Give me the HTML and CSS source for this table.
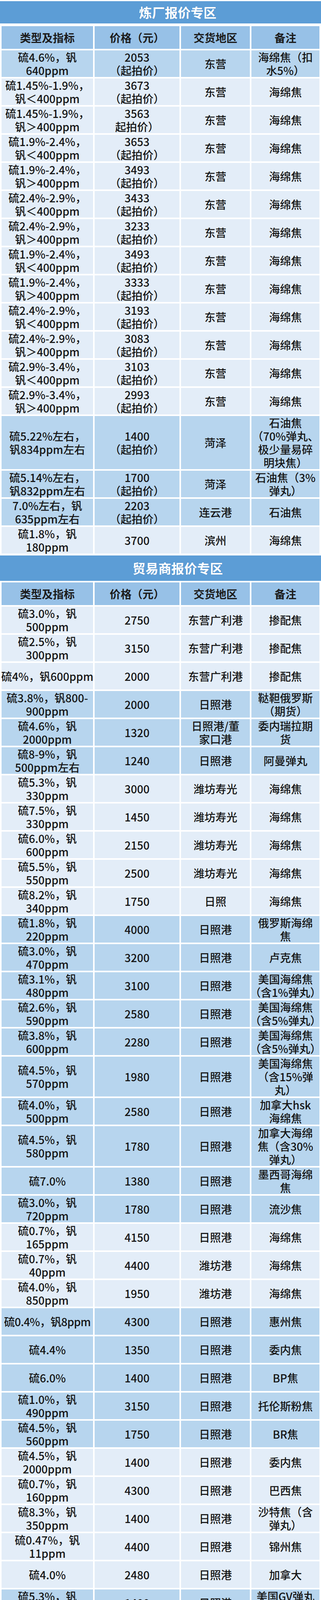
FILE: index.html
```html
<!DOCTYPE html>
<html lang="zh-CN">
<head>
<meta charset="utf-8">
<title>报价专区</title>
<link rel="stylesheet" href="styles.css">
</head>
<body>
<section class="zone zone-one">
<div class="zone-title first">炼厂报价专区</div>
<div class="grid">
<div class="row head"><div>类型及指标</div><div>价格（元）</div><div>交货地区</div><div>备注</div></div>
<div class="row d"><div>硫4.6%，钒<br>640ppm</div><div>2053<br>（起拍价）</div><div>东营</div><div>海绵焦（扣<br>水5%）</div></div>
<div class="row l"><div>硫1.45%-1.9%，<br>钒＜400ppm</div><div>3673<br>（起拍价）</div><div>东营</div><div>海绵焦</div></div>
<div class="row l"><div>硫1.45%-1.9%，<br>钒＞400ppm</div><div>3563<br>起拍价）</div><div>东营</div><div>海绵焦</div></div>
<div class="row l"><div>硫1.9%-2.4%，<br>钒＜400ppm</div><div>3653<br>（起拍价）</div><div>东营</div><div>海绵焦</div></div>
<div class="row l"><div>硫1.9%-2.4%，<br>钒＞400ppm</div><div>3493<br>（起拍价）</div><div>东营</div><div>海绵焦</div></div>
<div class="row l"><div>硫2.4%-2.9%，<br>钒＜400ppm</div><div>3433<br>（起拍价）</div><div>东营</div><div>海绵焦</div></div>
<div class="row l"><div>硫2.4%-2.9%，<br>钒＞400ppm</div><div>3233<br>（起拍价）</div><div>东营</div><div>海绵焦</div></div>
<div class="row l"><div>硫1.9%-2.4%，<br>钒＜400ppm</div><div>3493<br>（起拍价）</div><div>东营</div><div>海绵焦</div></div>
<div class="row l"><div>硫1.9%-2.4%，<br>钒＞400ppm</div><div>3333<br>（起拍价）</div><div>东营</div><div>海绵焦</div></div>
<div class="row l"><div>硫2.4%-2.9%，<br>钒＜400ppm</div><div>3193<br>（起拍价）</div><div>东营</div><div>海绵焦</div></div>
<div class="row l"><div>硫2.4%-2.9%，<br>钒＞400ppm</div><div>3083<br>（起拍价）</div><div>东营</div><div>海绵焦</div></div>
<div class="row l"><div>硫2.9%-3.4%，<br>钒＜400ppm</div><div>3103<br>（起拍价）</div><div>东营</div><div>海绵焦</div></div>
<div class="row l"><div>硫2.9%-3.4%，<br>钒＞400ppm</div><div>2993<br>（起拍价）</div><div>东营</div><div>海绵焦</div></div>
<div class="row d h4"><div>硫5.22%左右，<br>钒834ppm左右</div><div>1400<br>（起拍价）</div><div>菏泽</div><div>石油焦<br>（70%弹丸、<br>极少量易碎<br>明块焦）</div></div>
<div class="row d"><div>硫5.14%左右，<br>钒832ppm左右</div><div>1700<br>（起拍价）</div><div>菏泽</div><div>石油焦（3%<br>弹丸）</div></div>
<div class="row d"><div>7.0%左右，钒<br>635ppm左右</div><div>2203<br>（起拍价）</div><div>连云港</div><div>石油焦</div></div>
<div class="row l"><div>硫1.8%，钒<br>180ppm</div><div>3700</div><div>滨州</div><div>海绵焦</div></div>
</div>
</section>

<section class="zone zone-two">
<div class="zone-title second">贸易商报价专区</div>
<div class="grid">
<div class="row head"><div>类型及指标</div><div>价格（元）</div><div>交货地区</div><div>备注</div></div>
<div class="row l"><div>硫3.0%，钒<br>500ppm</div><div>2750</div><div>东营广利港</div><div>掺配焦</div></div>
<div class="row l"><div>硫2.5%，钒<br>300ppm</div><div>3150</div><div>东营广利港</div><div>掺配焦</div></div>
<div class="row l"><div>硫4%，钒600ppm</div><div>2000</div><div>东营广利港</div><div>掺配焦</div></div>
<div class="row d"><div>硫3.8%，钒800-<br>900ppm</div><div>2000</div><div>日照港</div><div>鞑靼俄罗斯<br>（期货）</div></div>
<div class="row d"><div>硫4.6%，钒<br>2000ppm</div><div>1320</div><div>日照港/董<br>家口港</div><div>委内瑞拉期<br>货</div></div>
<div class="row d"><div>硫8-9%，钒<br>500ppm左右</div><div>1240</div><div>日照港</div><div>阿曼弹丸</div></div>
<div class="row l"><div>硫5.3%，钒<br>330ppm</div><div>3000</div><div>潍坊寿光</div><div>海绵焦</div></div>
<div class="row l"><div>硫7.5%，钒<br>330ppm</div><div>1450</div><div>潍坊寿光</div><div>海绵焦</div></div>
<div class="row l"><div>硫6.0%，钒<br>600ppm</div><div>2150</div><div>潍坊寿光</div><div>海绵焦</div></div>
<div class="row l"><div>硫5.5%，钒<br>550ppm</div><div>2500</div><div>潍坊寿光</div><div>海绵焦</div></div>
<div class="row l"><div>硫8.2%，钒<br>340ppm</div><div>1750</div><div>日照</div><div>海绵焦</div></div>
<div class="row d"><div>硫1.8%，钒<br>220ppm</div><div>4000</div><div>日照港</div><div>俄罗斯海绵<br>焦</div></div>
<div class="row d"><div>硫3.0%，钒<br>470ppm</div><div>3200</div><div>日照港</div><div>卢克焦</div></div>
<div class="row d"><div>硫3.1%，钒<br>480ppm</div><div>3100</div><div>日照港</div><div>美国海绵焦<br>（含1%弹丸）</div></div>
<div class="row d"><div>硫2.6%，钒<br>590ppm</div><div>2580</div><div>日照港</div><div>美国海绵焦<br>（含5%弹丸）</div></div>
<div class="row d"><div>硫3.8%，钒<br>600ppm</div><div>2280</div><div>日照港</div><div>美国海绵焦<br>（含5%弹丸）</div></div>
<div class="row d h3"><div>硫4.5%，钒<br>570ppm</div><div>1980</div><div>日照港</div><div>美国海绵焦<br>（含15%弹<br>丸）</div></div>
<div class="row d"><div>硫4.0%，钒<br>500ppm</div><div>2580</div><div>日照港</div><div>加拿大hsk<br>海绵焦</div></div>
<div class="row d h3"><div>硫4.5%，钒<br>580ppm</div><div>1780</div><div>日照港</div><div>加拿大海绵<br>焦（含30%<br>弹丸）</div></div>
<div class="row d"><div>硫7.0%</div><div>1380</div><div>日照港</div><div>墨西哥海绵<br>焦</div></div>
<div class="row d"><div>硫3.0%，钒<br>720ppm</div><div>1780</div><div>日照港</div><div>流沙焦</div></div>
<div class="row l"><div>硫0.7%，钒<br>165ppm</div><div>4150</div><div>日照港</div><div>海绵焦</div></div>
<div class="row l"><div>硫0.7%，钒<br>40ppm</div><div>4400</div><div>潍坊港</div><div>海绵焦</div></div>
<div class="row l"><div>硫4.0%，钒<br>850ppm</div><div>1950</div><div>潍坊港</div><div>海绵焦</div></div>
<div class="row d"><div class="fit">硫0.4%，钒8ppm</div><div>4300</div><div>日照港</div><div>惠州焦</div></div>
<div class="row d"><div>硫4.4%</div><div>1350</div><div>日照港</div><div>委内焦</div></div>
<div class="row d"><div>硫6.0%</div><div>1400</div><div>日照港</div><div>BP焦</div></div>
<div class="row d"><div>硫1.0%，钒<br>490ppm</div><div>3150</div><div>日照港</div><div>托伦斯粉焦</div></div>
<div class="row d"><div>硫4.5%，钒<br>560ppm</div><div>1750</div><div>日照港</div><div>BR焦</div></div>
<div class="row l"><div>硫4.5%，钒<br>2000ppm</div><div>1400</div><div>日照港</div><div>委内焦</div></div>
<div class="row l"><div>硫0.7%，钒<br>160ppm</div><div>4300</div><div>日照港</div><div>巴西焦</div></div>
<div class="row l"><div>硫8.3%，钒<br>350ppm</div><div>1400</div><div>日照港</div><div>沙特焦（含<br>弹丸）</div></div>
<div class="row l"><div>硫0.47%，钒<br>11ppm</div><div>4400</div><div>日照港</div><div>锦州焦</div></div>
<div class="row l"><div>硫4.0%</div><div>2480</div><div>日照港</div><div>加拿大</div></div>
<div class="row d"><div>硫5.3%，钒<br>744ppm</div><div>1400</div><div>日照港</div><div>美国GV弹丸<br>焦</div></div>
<div class="row d"><div>硫3.8%，钒<br>800ppm</div><div>2200</div><div>日照港</div><div>鞑靼俄焦<br>（吨包）</div></div>
<div class="row l"><div>硫0.5%，钒<br>20ppm</div><div>4000</div><div>岚山港</div><div>印尼焦</div></div>
<div class="row l"><div>硫4.5%</div><div>1350</div><div>岚山港</div><div>俄罗斯焦</div></div>
<div class="row l"><div>硫4.5%</div><div>1050</div><div>日照港<br>岚山港</div><div>委内焦</div></div>
<div class="row d h4"><div>硫8.3%，钒<br>340ppm</div><div>暂未报价</div><div>日照港<br>潍坊港</div><div>沙特焦</div></div>
<div class="row l"><div class="fit">硫1.8%，钒400ppm</div><div>暂未报价</div><div>日照港</div><div>海绵焦</div></div>
<div class="row l"><div class="fit">硫6.0%，钒450ppm</div><div>暂未报价</div><div>日照港</div><div>海绵焦</div></div>
<div class="row l"><div class="fit">硫2.5%，钒950ppm</div><div>暂未报价</div><div>日照港</div><div>弹丸焦</div></div>
<div class="row l"><div class="fit">硫2.8%，钒800ppm</div><div>暂未报价</div><div>日照港</div><div>弹丸焦</div></div>
<div class="row d"><div>硫8.0%，钒<br>400ppm</div><div>暂未报价</div><div>日照</div><div>海绵焦</div></div>
<div class="row l"><div>硫3.2%，钒<br>480ppm</div><div>暂未报价</div><div>日照港</div><div>海绵焦</div></div>
</div>
</section>
<div class="tail"></div>
</body>
</html>
```

FILE: styles.css
```css
* {
  box-sizing: border-box;
}

html,
body {
  margin: 0;
  padding: 0;
  background: #ffffff;
}

body {
  padding-top: 3px;
  color: #141414;
  font-family: "Noto Sans CJK SC", sans-serif;
}

.zone-title {
  background: #5c9dd6;
  color: #ffffff;
  font-size: 33px;
  font-weight: 700;
  text-align: center;
  padding-left: 88px;
  text-shadow: 0 0 2px rgba(40, 90, 150, 0.35);
}

.zone-title.first {
  height: 57px;
  line-height: 57px;
  margin-bottom: 3px;
}

.zone-title.second {
  height: 65px;
  line-height: 65px;
}

.grid {
  display: flex;
  flex-direction: column;
  gap: 4px;
  padding: 4px;
}

.zone-one .grid {
  padding-bottom: 5px;
}

.row {
  display: grid;
  grid-template-columns: 234px 217px 176px 174px;
  gap: 4px;
  height: 68px;
}

.row > div {
  display: flex;
  align-items: center;
  justify-content: center;
  text-align: center;
  white-space: nowrap;
  font-size: 28px;
  line-height: 34px;
  font-weight: 500;
}

.row.head {
  height: 58px;
}

.row.head > div {
  background: #97c1e7;
  font-weight: 700;
  color: #1c1c1c;
}

.row.d > div {
  background: #b7d5ee;
}

.row.l > div {
  background: #e3edf8;
}

.row.h3 {
  height: 102px;
}

.row.h4 {
  height: 136px;
}

.row > div.fit {
  letter-spacing: -0.6px;
}

.tail {
  margin-top: 7px;
  height: 4px;
  background: #a9cbea;
}
```
